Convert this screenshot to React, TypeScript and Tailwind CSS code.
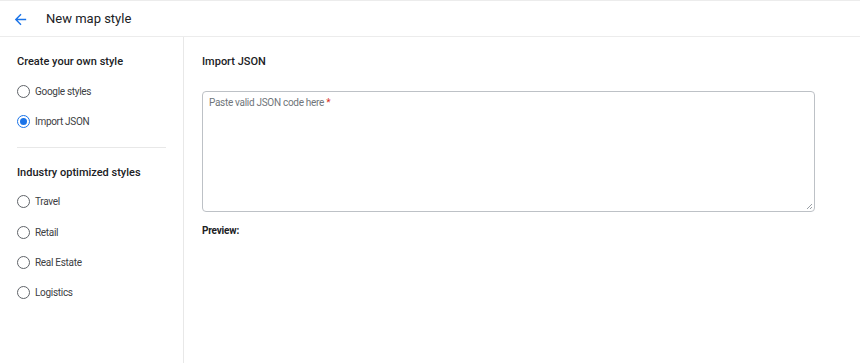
import React from "react";

function Radio({ label, checked }: { label: string; checked?: boolean }) {
  return (
    <div className="flex items-center h-[30.3px]">
      <span
        className={
          "w-[13px] h-[13px] rounded-full border-[1.5px] flex items-center justify-center " +
          (checked ? "border-[#1a73e8]" : "border-[#5f6368]")
        }
      >
        {checked && <span className="w-[7px] h-[7px] rounded-full bg-[#1a73e8]" />}
      </span>
      <span className="ml-[5px] text-[10px] tracking-[-0.3px] text-[#3c4043]">{label}</span>
    </div>
  );
}

export default function App() {
  return (
    <div
      className="w-[860px] h-[363px] bg-white flex flex-col overflow-hidden"
      style={{ fontFamily: "Roboto, 'Liberation Sans', sans-serif" }}
    >
      <div className="h-[37px] border-t border-[#ececec] border-b flex items-center shrink-0">
        <svg className="ml-[12px] mt-[1px]" width="17" height="17" viewBox="0 0 24 24">
          <path d="M20 11H7.83l5.59-5.59L12 4l-8 8 8 8 1.41-1.41L7.83 13H20v-2z" fill="#1a73e8" />
        </svg>
        <span className="ml-[17px] mt-[1px] text-[13px] text-[#202124]">New map style</span>
      </div>
      <div className="flex flex-1">
        <div className="w-[184px] border-r border-[#e8e8e8] pl-[17px] pt-[17px] shrink-0">
          <div className="text-[11px] font-medium text-[#202124] h-[16px] leading-[16px]">Create your own style</div>
          <div className="mt-[6px]">
            <Radio label="Google styles" />
            <Radio label="Import JSON" checked />
          </div>
          <div className="mt-[10px] mr-[17px] border-t border-[#e8e8e8]" />
          <div className="mt-[17px] text-[11px] font-medium text-[#202124] h-[16px] leading-[16px]">Industry optimized styles</div>
          <div className="mt-[6px]">
            <Radio label="Travel" />
            <Radio label="Retail" />
            <Radio label="Real Estate" />
            <Radio label="Logistics" />
          </div>
        </div>
        <div className="flex-1 pl-[18px] pt-[17px]">
          <div className="text-[11px] font-medium text-[#202124] h-[16px] leading-[16px]">Import JSON</div>
          <div className="mt-[21px] w-[613px] h-[121px] border border-[#bdc1c6] rounded-[4px] relative px-[6px] pt-[4px]">
            <div className="text-[10px] leading-[14px] tracking-[-0.3px] text-[#70757a]">
              Paste valid JSON code here <span className="text-[#d93025]">*</span>
            </div>
            <svg className="absolute right-[1px] bottom-[1px]" width="7" height="7" viewBox="0 0 7 7">
              <path d="M6 1L1 6M6 4L4 6" stroke="#9aa0a6" strokeWidth="1" />
            </svg>
          </div>
          <div className="mt-[11px] text-[10px] font-bold tracking-[-0.2px] text-[#202124]">Preview:</div>
        </div>
      </div>
    </div>
  );
}
